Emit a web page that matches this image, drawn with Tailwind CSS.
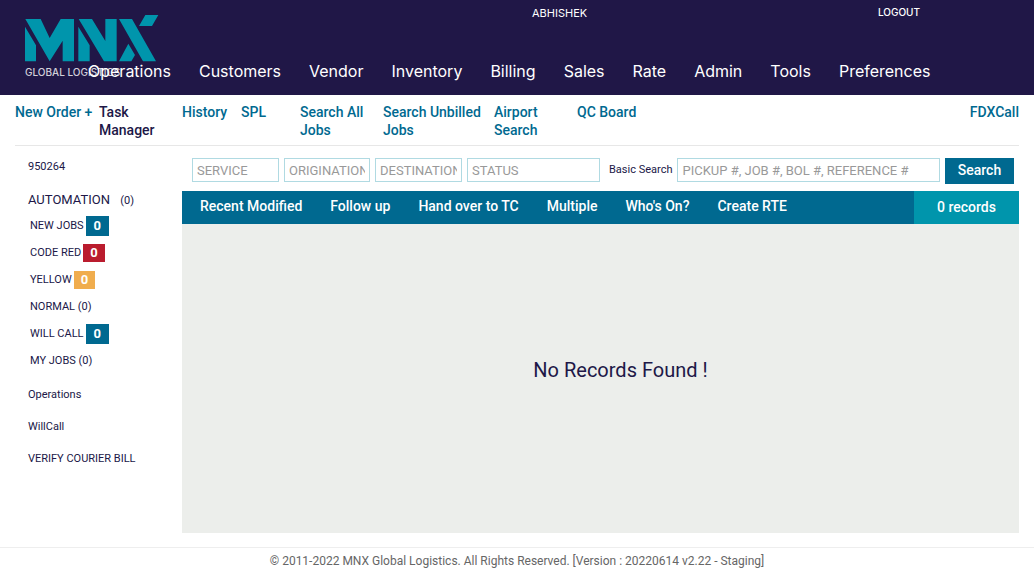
<!DOCTYPE html>
<html lang="en">
<head>
<meta charset="utf-8">
<meta name="viewport" content="width=device-width, initial-scale=1">
<title>MNX Global Logistics - Task Manager</title>
<script src="https://cdn.jsdelivr.net/npm/@tailwindcss/browser@4"></script>
</head>
<body class="flex min-h-screen flex-col bg-white font-[Roboto,sans-serif] text-[#201747]">
<header class="relative flex h-[95px] shrink-0 flex-col justify-between bg-[#201747] font-[Inter,sans-serif] text-white">
  <a href="#" aria-label="MNX Global Logistics" class="absolute left-[25px] top-[15px] w-[134px]">
    <svg class="block h-[47px] w-[134px]" viewBox="75 45 402 141" fill="#0095ac" aria-hidden="true">
      <path d="M76 57h46l27 57 33-57h40v127h-34v-62l-39 62zM75 80l33 56v48H75z"/>
      <path d="M236 57h40l40 66V57h34v127h-38zM235 80l34 56v48h-34z"/>
      <path d="M357 57h39l72 127h-39zM436 45h39l-19 33h-39zM385 131l20 34-11 19h-37z"/>
    </svg>
    <span class="block whitespace-nowrap pt-1 text-[10px] leading-3 font-medium text-[#d2d0da]">GLOBAL LOGISTICS</span>
  </a>
  <div class="flex pl-[532px] pr-[114px] pt-1.5 text-[11px] leading-[14px]">
    <span>ABHISHEK</span>
    <a href="#" class="-mt-px ml-auto text-[10px] font-medium">LOGOUT</a>
  </div>
  <nav aria-label="Main" class="relative flex gap-7 whitespace-nowrap pb-3 pl-[88px] text-base leading-6">
    <a href="#">Operations</a>
    <a href="#">Customers</a>
    <a href="#">Vendor</a>
    <a href="#">Inventory</a>
    <a href="#">Billing</a>
    <a href="#">Sales</a>
    <a href="#">Rate</a>
    <a href="#">Admin</a>
    <a href="#">Tools</a>
    <a href="#">Preferences</a>
  </nav>
</header>

<nav aria-label="Jobs" class="mx-[15px] grid grid-cols-[84px_83px_59px_59px_83px_111px_83px_1fr_auto] border-b border-[#e7e7e7] pb-1.5 pt-2 text-sm leading-[18px] font-medium text-[#006990]">
  <a href="#" class="whitespace-nowrap">New Order +</a>
  <a href="#" class="w-16 text-[#201747]">Task Manager</a>
  <a href="#">History</a>
  <a href="#">SPL</a>
  <a href="#" class="w-16">Search All Jobs</a>
  <a href="#">Search Unbilled Jobs</a>
  <a href="#" class="w-12">Airport Search</a>
  <a href="#">QC Board</a>
  <a href="#">FDXCall</a>
</nav>

<div class="mx-[15px] flex flex-1">
  <aside class="w-[167px] shrink-0 pl-[13px] pt-[13px] text-[11px] leading-4">
    <p>950264</p>
    <h2 class="mt-[17px] text-[13px]">AUTOMATION <span class="ml-[7px] text-[11px]">(0)</span></h2>
    <ul class="mt-[3px] pl-0.5">
      <li class="flex h-[27px] items-center gap-0.5"><a href="#">NEW JOBS</a><span class="bg-[#006990] px-2 py-0.5 text-[13px] leading-4 font-bold text-white">0</span></li>
      <li class="flex h-[27px] items-center gap-0.5"><a href="#">CODE RED</a><span class="bg-[#ba1c2e] px-[7px] py-px text-[13px] leading-4 font-bold text-white">0</span></li>
      <li class="flex h-[27px] items-center gap-0.5"><a href="#">YELLOW</a><span class="bg-[#f0ad4e] px-[7px] py-px text-[13px] leading-4 font-bold text-white">0</span></li>
      <li class="flex h-[27px] items-center"><a href="#">NORMAL (0)</a></li>
      <li class="flex h-[27px] items-center gap-0.5"><a href="#">WILL CALL</a><span class="bg-[#006990] px-2 py-0.5 text-[13px] leading-4 font-bold text-white">0</span></li>
      <li class="flex h-[27px] items-center"><a href="#">MY JOBS (0)</a></li>
    </ul>
    <ul class="mt-[13px] flex flex-col gap-4">
      <li><a href="#">Operations</a></li>
      <li><a href="#">WillCall</a></li>
      <li><a href="#">VERIFY COURIER BILL</a></li>
    </ul>
  </aside>

  <main class="flex min-w-0 flex-1 flex-col">
    <form class="flex gap-[5px] pb-[7px] pl-2.5 pr-[5px] pt-3 text-[13px]" onsubmit="return false">
      <input aria-label="Service" placeholder="SERVICE" class="h-6 w-[87px] border border-[#b0dae2] px-1 placeholder:text-[#999]">
      <input aria-label="Origination" placeholder="ORIGINATION" class="h-6 w-[86px] border border-[#b0dae2] px-1 placeholder:text-[#999]">
      <input aria-label="Destination" placeholder="DESTINATION" class="h-6 w-[87px] border border-[#b0dae2] px-1 placeholder:text-[#999]">
      <input aria-label="Status" placeholder="STATUS" class="h-6 w-[133px] border border-[#b0dae2] px-1 placeholder:text-[#999]">
      <label for="basic" class="ml-1 whitespace-nowrap pt-1 text-[11px] leading-4">Basic Search</label>
      <input id="basic" placeholder="PICKUP #, JOB #, BOL #, REFERENCE #" class="h-6 min-w-0 flex-1 border border-[#b0dae2] px-1 placeholder:text-[#999]">
      <button class="h-[26px] w-[69px] bg-[#006990] pb-0.5 text-sm font-medium text-white">Search</button>
    </form>
    <div class="flex h-[33px] bg-[#006990] text-sm leading-[30px] font-medium text-white">
      <nav aria-label="Records" class="flex flex-1 gap-7 whitespace-nowrap pl-[18px]">
        <a href="#">Recent Modified</a>
        <a href="#">Follow up</a>
        <a href="#">Hand over to TC</a>
        <a href="#">Multiple</a>
        <a href="#">Who's On?</a>
        <a href="#">Create RTE</a>
      </nav>
      <span class="w-[105px] bg-[#0095ac] text-center leading-8">0 records</span>
    </div>
    <section class="flex flex-1 items-center justify-center bg-[#eceeeb] pb-[18px] pl-20 pr-10">
      <p class="text-xl">No Records Found !</p>
    </section>
  </main>
</div>

<footer class="mt-3.5 border-t border-[#eee] pb-[5px] pt-1 text-center text-xs leading-[18px] text-[#666]">© 2011-2022 MNX Global Logistics. All Rights Reserved. [Version : 20220614 v2.22 - Staging]</footer>
</body>
</html>
